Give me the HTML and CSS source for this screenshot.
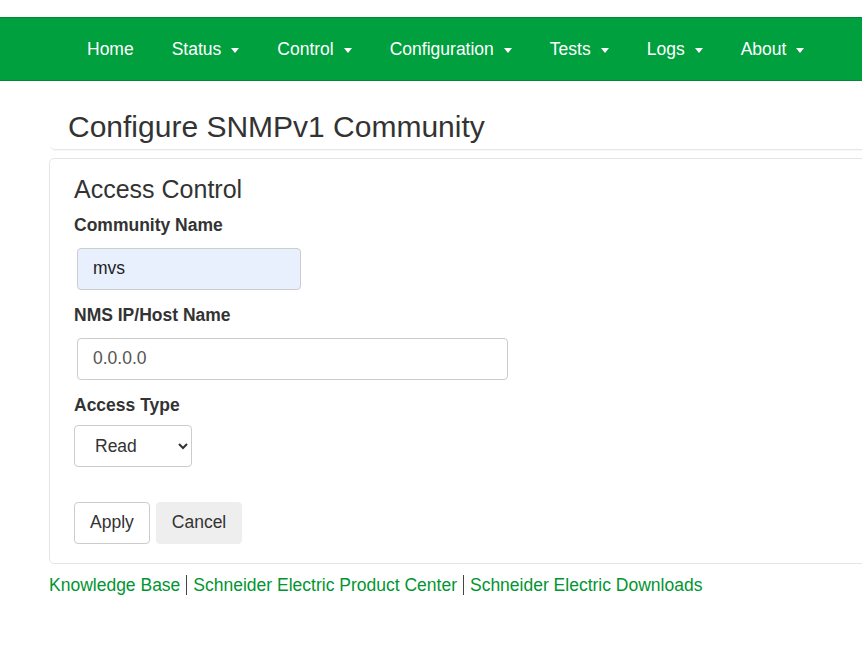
FILE: index.html
```html
<!DOCTYPE html>
<html lang="en">
<head>
  <meta charset="UTF-8">
  <meta name="viewport" content="width=device-width, initial-scale=1.0">
  <title>Configure SNMPv1 Community</title>
  <link rel="stylesheet" href="styles.css">
</head>
<body>
  <nav class="navbar">
    <ul class="nav">
      <li><a href="#">Home</a></li>
      <li><a href="#">Status <span class="caret"></span></a></li>
      <li><a href="#">Control <span class="caret"></span></a></li>
      <li><a href="#">Configuration <span class="caret"></span></a></li>
      <li><a href="#">Tests <span class="caret"></span></a></li>
      <li><a href="#">Logs <span class="caret"></span></a></li>
      <li><a href="#">About <span class="caret"></span></a></li>
    </ul>
  </nav>

  <div class="container">
    <div class="page-header">
      <h1>Configure SNMPv1 Community</h1>
    </div>

    <div class="panel">
      <h2>Access Control</h2>
      <form>
        <label for="community">Community Name</label>
        <input id="community" class="form-control autofill short" type="text" value="mvs">

        <label for="nms">NMS IP/Host Name</label>
        <input id="nms" class="form-control wide" type="text" value="0.0.0.0">

        <label for="access">Access Type</label>
        <select id="access" class="form-control select">
          <option>Read</option>
          <option>Write</option>
          <option>Disabled</option>
        </select>

        <div class="actions">
          <button type="button" class="btn btn-default">Apply</button>
          <button type="button" class="btn btn-cancel">Cancel</button>
        </div>
      </form>
    </div>

    <div class="footer-links">
      <a href="#">Knowledge Base</a><span class="sep"></span><a href="#">Schneider Electric Product Center</a><span class="sep"></span><a href="#">Schneider Electric Downloads</a>
    </div>
  </div>
</body>
</html>
```

FILE: styles.css
```css
html, body {
  margin: 0;
  padding: 0;
  overflow: hidden;
  font-family: "Liberation Sans", Arial, sans-serif;
  font-size: 17.5px;
  color: #333;
  background-color: #fff;
}

.navbar {
  margin-top: 17px;
  height: 62px;
  background-color: #00a03e;
  border-top: 1px solid #00873a;
  border-bottom: 1px solid #00873a;
}

.nav {
  display: flex;
  list-style: none;
  margin: 0;
  padding: 0 0 0 68px;
  height: 100%;
}

.nav li a {
  display: flex;
  align-items: center;
  height: 100%;
  padding: 0 19px;
  color: #fff;
  text-decoration: none;
  font-size: 17.5px;
}

.caret {
  display: inline-block;
  width: 0;
  height: 0;
  margin-left: 10px;
  margin-top: 2px;
  border-top: 5px solid #fff;
  border-left: 4px solid transparent;
  border-right: 4px solid transparent;
}

.container {
  margin-left: 49px;
  width: 1000px;
}

.page-header {
  margin-left: 1px;
  padding: 29px 0 6px 18px;
  border-bottom: 1px solid #e6e6e6;
  border-bottom-left-radius: 5px;
  box-shadow: 0 1px 1px rgba(0, 0, 0, 0.03);
}

.page-header h1 {
  margin: 0;
  font-size: 30px;
  font-weight: normal;
  line-height: 1.1;
}

.panel {
  margin-top: 8px;
  padding: 17px 24px 19px;
  border: 1px solid #e5e5e5;
  border-radius: 5px;
}

.panel h2 {
  margin: 0 0 9px;
  font-size: 25px;
  font-weight: normal;
  line-height: 1.1;
}

label {
  display: block;
  font-weight: bold;
  line-height: 25px;
  margin-bottom: 10px;
}

.form-control {
  display: block;
  box-sizing: border-box;
  height: 42px;
  padding: 7px 15px;
  font-family: "Liberation Sans", Arial, sans-serif;
  font-size: 17.5px;
  color: #555;
  background-color: #fff;
  border: 1px solid #ccc;
  border-radius: 4px;
  margin: 0 0 13px 3px;
}

.form-control.autofill {
  background-color: #e8f0fe;
  color: #222;
}

.short {
  width: 224px;
}

.wide {
  width: 431px;
}

.select {
  width: 118px;
  margin-left: 0;
  padding: 7px 12px 7px 16px;
  color: #333;
}

label[for="access"] {
  margin-bottom: 7px;
}

.actions {
  display: flex;
  gap: 6px;
  margin-top: 35px;
}

.btn {
  box-sizing: border-box;
  height: 42px;
  padding: 0 15px;
  font-family: "Liberation Sans", Arial, sans-serif;
  font-size: 17.5px;
  color: #333;
  border-radius: 4px;
  cursor: pointer;
}

.btn-default {
  background-color: #fff;
  border: 1px solid #ccc;
}

.btn-cancel {
  background-color: #eee;
  border: 1px solid #eee;
}

.footer-links {
  display: flex;
  align-items: center;
  margin-top: 11px;
  font-size: 17.5px;
}

.footer-links a {
  color: #009530;
  text-decoration: none;
}

.sep {
  display: inline-block;
  width: 1px;
  height: 20px;
  margin: 0 6px;
  background-color: #444;
}
```
